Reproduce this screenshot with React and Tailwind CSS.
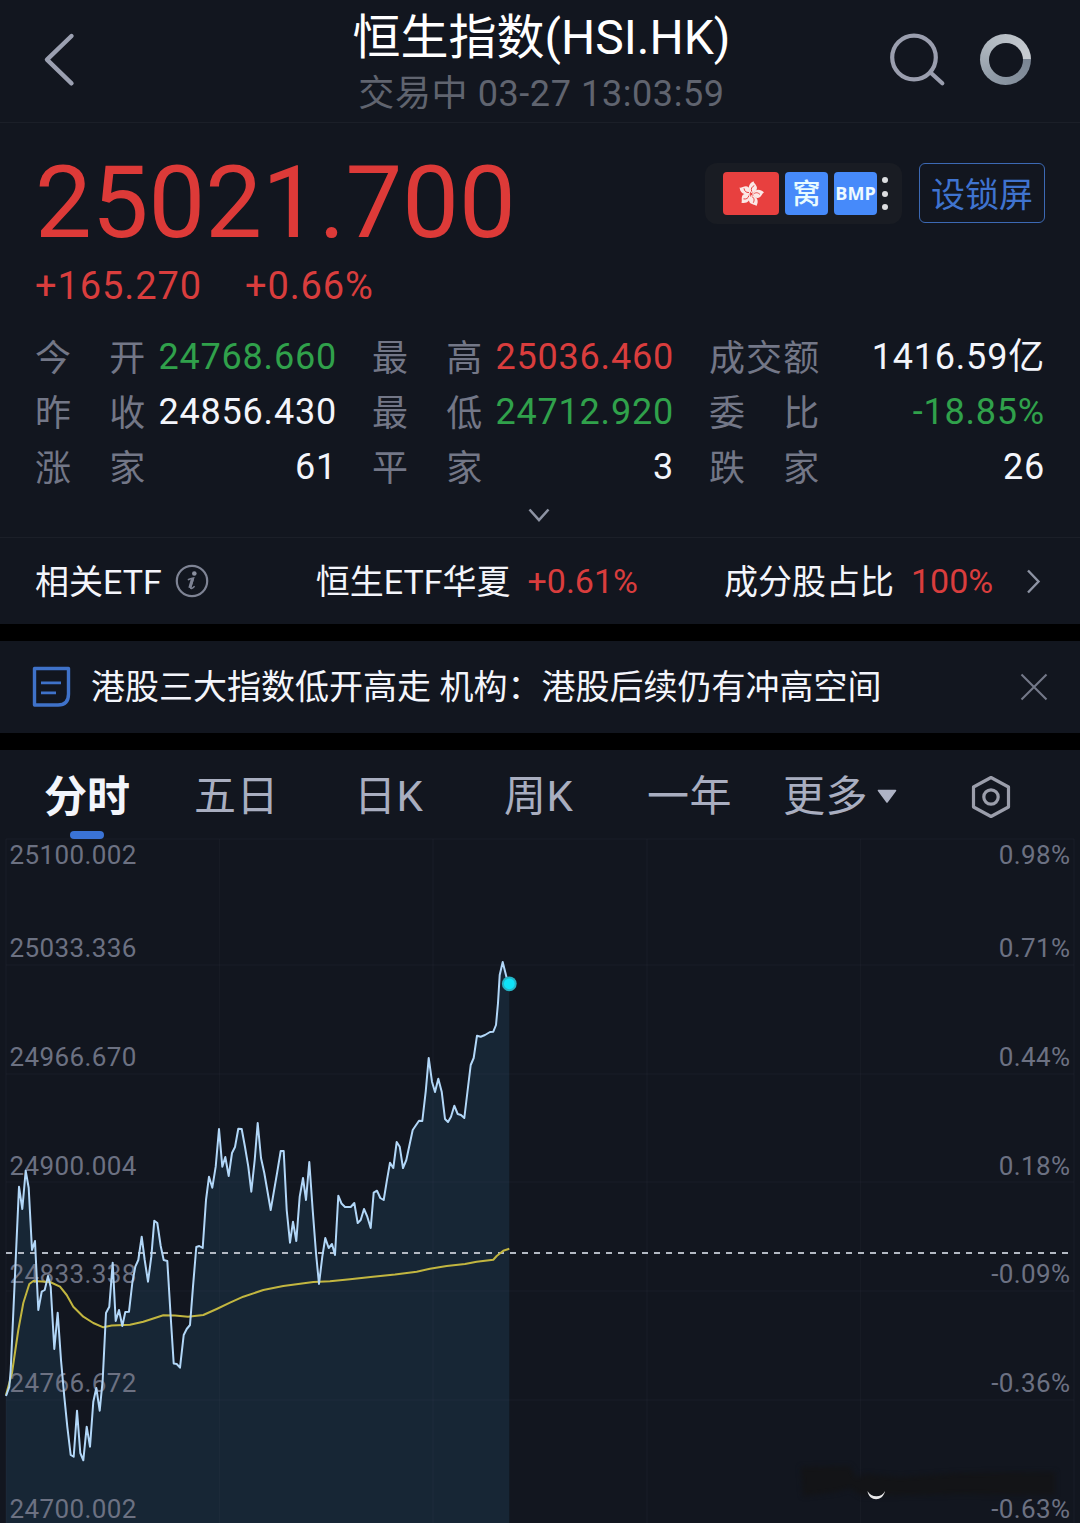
const stats = [
  { label: '今开', value: '24768.660', color: 'text-[#30a14b]' },
  { label: '最高', value: '25036.460', color: 'text-[#d93d3d]' },
  { label: '成交额', value: '1416.59亿', color: 'text-[#f3f5fb]' },
  { label: '昨收', value: '24856.430', color: 'text-[#f3f5fb]' },
  { label: '最低', value: '24712.920', color: 'text-[#30a14b]' },
  { label: '委比', value: '-18.85%', color: 'text-[#30a14b]' },
  { label: '涨家', value: '61', color: 'text-[#f3f5fb]' },
  { label: '平家', value: '3', color: 'text-[#f3f5fb]' },
  { label: '跌家', value: '26', color: 'text-[#f3f5fb]' },
];

// Chart coordinates, the plot starts at y = 838
const price = [
  [6, 1396], [9.3, 1387], [10.7, 1370], [19, 1186.7], [22.3, 1209], [25.7, 1170.7], [28.7, 1188], [32, 1250],
  [35, 1241], [38.3, 1310], [41.7, 1291.7], [44.7, 1290], [48, 1276], [50.7, 1287], [54.3, 1349],
  [57.7, 1312.7], [61, 1360], [64.3, 1396.7], [67.3, 1426.7], [70.7, 1455], [73.7, 1456.7],
  [77, 1410.7], [80.3, 1453], [83.3, 1460.3], [86.7, 1426.7], [90, 1446.7], [93.3, 1401.7],
  [96.3, 1388], [99.7, 1410.7], [102.7, 1380], [106, 1313], [109.3, 1306.7], [112.7, 1262.7],
  [115.7, 1321], [119, 1310], [122.3, 1326], [125.3, 1312], [129, 1311.7], [132.3, 1283],
  [135.3, 1266.7], [138.3, 1260], [141.7, 1236.7], [144.7, 1260], [148, 1281.7], [151.3, 1256.7],
  [154.3, 1220.7], [157.3, 1223], [160.7, 1246], [163.7, 1260], [167.3, 1261], [170.7, 1316.7],
  [173.7, 1363.5], [176.7, 1364], [180, 1367.7], [183.7, 1335], [186.7, 1329], [190, 1325],
  [193, 1286.7], [196.3, 1247], [199.3, 1246], [202.7, 1248], [206, 1200], [209, 1176.7],
  [212.3, 1187.7], [215.7, 1166.7], [219, 1129], [222.3, 1166.7], [225.3, 1157], [228.7, 1176],
  [232, 1153], [235, 1147], [238.3, 1128.7], [241.7, 1129], [245, 1147], [248.3, 1166.7],
  [251.3, 1191.7], [254.7, 1160], [257.7, 1123], [261, 1158], [264.3, 1173], [270.7, 1210],
  [277.3, 1171.7], [280.7, 1151], [283.7, 1151], [286.7, 1210], [290, 1242.7], [293, 1221.7],
  [296.3, 1241], [299.7, 1196.7], [303, 1178], [306, 1200], [309.3, 1162], [312.7, 1210],
  [316, 1253], [319, 1284], [322.3, 1256.7], [325.3, 1238], [328.7, 1248], [332, 1244],
  [335, 1255], [338.3, 1195.7], [341.5, 1203.5], [345, 1207], [350.7, 1207], [354.3, 1203],
  [357.7, 1223], [360.7, 1220], [364, 1209], [367.3, 1216.7], [370.7, 1228], [373.7, 1192.7],
  [377, 1190.7], [380.3, 1198], [383.7, 1200], [386.7, 1181.7], [390, 1162.7], [393.3, 1168],
  [396.7, 1142], [399.7, 1146.7], [403, 1168], [406.3, 1160], [412.7, 1130], [419, 1120.7],
  [422.3, 1121], [425.7, 1091.7], [428.7, 1058], [432, 1081.7], [435, 1092], [438.3, 1078.7],
  [441.7, 1091.7], [445, 1119], [448, 1122], [451, 1116.7], [454.3, 1105.7], [457.7, 1114],
  [461, 1115], [464.3, 1118], [467.3, 1093], [470.7, 1065], [473.7, 1058], [477, 1035.7],
  [480.7, 1036.7], [485, 1035], [490, 1032], [493.3, 1031.7], [496, 1025], [498, 1003],
  [499.7, 975], [502.7, 962], [506.7, 978], [509.3, 983.7],
];

const average = [
  [6, 1395], [12, 1373], [18.3, 1330], [23.3, 1303], [29.3, 1284], [33.3, 1281], [50, 1282],
  [60, 1286.7], [66.7, 1295], [73.3, 1306.7], [83.3, 1316.7], [93.3, 1323], [103.3, 1327.3],
  [111.7, 1325.5], [130, 1324.7], [143.3, 1321.7], [163.3, 1315.3], [175, 1315.5], [188, 1316.7],
  [203.3, 1315], [216.7, 1309], [230, 1302.7], [243.3, 1296.7], [263.3, 1290], [283.3, 1286],
  [313.3, 1282], [330, 1281.3], [350, 1279.3], [373, 1276.7], [395, 1274.5], [416.7, 1271.7],
  [430, 1268.7], [446.7, 1266], [465, 1264], [476.7, 1261.7], [493.3, 1259.7], [496.7, 1256],
  [503.3, 1250.7], [509.3, 1248.7],
];

const axis = [
  { y: 864, left: '25100.002', right: '0.98%' },
  { y: 957, left: '25033.336', right: '0.71%' },
  { y: 1066, left: '24966.670', right: '0.44%' },
  { y: 1175, left: '24900.004', right: '0.18%' },
  { y: 1283, left: '24833.338', right: '-0.09%' },
  { y: 1392, left: '24766.672', right: '-0.36%' },
  { y: 1518, left: '24700.002', right: '-0.63%' },
];

const toPoints = (list) => list.map((p) => p.join(',')).join(' ');

function Header() {
  return (
    <header className="flex h-[123px] border-b border-[#1b1f28] pl-[42px]">
      <svg className="mt-[31px] h-[57px] w-[80px]" viewBox="42 31 80 57" fill="none">
        <path d="M71.5 36 L47 59.7 L71.5 83.3" stroke="#9ba0b1" strokeWidth="4.4" strokeLinecap="round" strokeLinejoin="round" />
      </svg>
      <div className="flex w-[840px] flex-col items-center pr-[1px] whitespace-nowrap">
        <h1 className="mt-[8px] text-[48px] leading-[60px] text-white">恒生指数(HSI.HK)</h1>
        <p className="mt-[5px] text-[36px] leading-[42px] tracking-[0.6px] text-[#60646f]">交易中 03-27 13:03:59</p>
      </div>
      <div className="-ml-[75px] flex items-start gap-[33px]">
        <svg className="mt-[31px] h-[57px] w-[60px]" viewBox="887 31 60 57" fill="none" stroke="#9a9eae" strokeWidth="4.2">
          <circle cx="914" cy="57.5" r="21.8" />
          <path d="M930.5 72.5 L942.3 83.3" strokeLinecap="round" />
        </svg>
        <div className="mt-[34px] flex h-[51px] w-[51px] shrink-0 items-center justify-center rounded-full bg-[conic-gradient(from_90deg,#7a8593,#8f9aa6_35%,#aeb6be_60%,#c9cdd2)]">
          <div className="h-[34px] w-[34px] rounded-full bg-[#12161f]"></div>
        </div>
      </div>
    </header>
  );
}

function Bauhinia() {
  return (
    <svg className="h-[28px] w-[28px]" viewBox="-14 -14 28 28">
      {[18, 90, 162, 234, 306].map((angle) => (
        <g key={angle} transform={`rotate(${angle})`}>
          <path d="M0 -1 C-5 -4 -6 -9 -1.5 -13 C-1 -11 4.5 -10 4 -6 C3.8 -3.5 1.5 -2.5 0 -1 Z" fill="#fbe9e7" />
          <path d="M0 -2.5 C-2 -5 -1.5 -7 0.5 -9" stroke="#e8403f" strokeWidth="0.9" fill="none" />
        </g>
      ))}
    </svg>
  );
}

function Quote() {
  return (
    <section className="h-[415px] border-b border-[#1b1f28] pr-[35px] pl-[35px]">
      <div className="flex justify-between pt-[30px]">
        <div>
          <div className="mt-[10px] text-[101px] leading-[80px] text-[#dd3a38]">25021.700</div>
          <div className="mt-[23px] flex gap-[43px] text-[38px] leading-[40px] tracking-[0.9px] text-[#d93d3d]">
            <span>+165.270</span>
            <span>+0.66%</span>
          </div>
        </div>
        <div className="mt-[10px] flex gap-[17px]">
          <div className="flex h-[61px] w-[197px] items-center rounded-xl bg-[#191c23] pl-[18px]">
            <div className="flex h-[43px] w-[56px] items-center justify-center rounded-[4px] bg-[#e8403f]">
              <Bauhinia />
            </div>
            <div className="ml-[6px] h-[43px] w-[43px] rounded-[4px] bg-[#468afa] text-center text-[28px] leading-[45px] font-medium text-[#e8fbff]">窝</div>
            <div className="ml-[6px] flex h-[43px] w-[43px] items-center justify-center rounded-[4px] bg-[#468afa] font-['Open_Sans'] text-[18px] font-bold text-[#eefaff]">BMP</div>
            <div className="ml-[5px] flex flex-col gap-[7.4px]">
              <i className="h-[6px] w-[6px] rounded-full bg-[#dcdde0]"></i>
              <i className="h-[6px] w-[6px] rounded-full bg-[#dcdde0]"></i>
              <i className="h-[6px] w-[6px] rounded-full bg-[#dcdde0]"></i>
            </div>
          </div>
          <button className="h-[60px] w-[126px] rounded-md border border-[#3c69b4] pt-[2px] text-[34px] leading-[58px] text-[#3f73cf]">设锁屏</button>
        </div>
      </div>

      {/* Figures */}
      <div className="mt-[24px] grid grid-cols-[302px_302px_336px] gap-x-[35px] text-[36px] leading-[55px] tracking-[0.8px]">
        {stats.map((item) => (
          <div key={item.label} className="flex justify-between whitespace-nowrap">
            <div className="flex h-[55px] w-[111px] justify-between pt-[2px] text-[#737787]">
              {item.label.split('').map((char) => <span key={char}>{char}</span>)}
            </div>
            <span className={item.color}>{item.value}</span>
          </div>
        ))}
      </div>
      <svg className="mx-auto mt-[8px] h-[24px] w-[28px] -translate-x-px" viewBox="0 0 28 24" fill="none">
        <path d="M4.5 6.5 L14 17 L23.5 6.5" stroke="#8d93a3" strokeWidth="2.6" />
      </svg>
    </section>
  );
}

function EtfRow() {
  return (
    <section className="flex h-[86px] items-center pl-[35px] text-[34px] leading-[86px] whitespace-nowrap text-[#f3f5fb]">
      <span className="pt-px">相关ETF</span>
      <svg className="ml-[13px] h-[34px] w-[34px]" viewBox="0 0 34 34" fill="none" stroke="#7e8394">
        <circle cx="17" cy="17" r="15.2" strokeWidth="2.2" />
        <circle cx="19.3" cy="9.5" r="2.3" fill="#8b90a0" stroke="none" />
        <path d="M12.8 15.8 C15 15 16.5 14.4 18.6 14 L15.6 23 C15.2 25.2 17 24.8 19.6 22.2" strokeWidth="1.5" />
        <path d="M17.6 14.5 L14.8 24" strokeWidth="3" />
      </svg>
      <span className="ml-[107px] pt-px">恒生ETF华夏</span>
      <span className="ml-[17px]  text-[#d93d3d]">+0.61%</span>
      <span className="ml-[86px] pt-px">成分股占比</span>
      <span className="ml-[17px] text-[#d93d3d]">100%</span>
      <svg className="ml-[31px] h-[28px] w-[20px]" viewBox="0 0 20 28" fill="none">
        <path d="M4 3.5 L14.5 14.5 L4 25.5" stroke="#8d93a3" strokeWidth="2.4" />
      </svg>
    </section>
  );
}

function NewsBar() {
  return (
    <section className="flex h-[92px] items-center pl-[32px]">
      <svg className="h-[42px] w-[39px]" viewBox="0 0 39 42" fill="none" stroke="#3f72c9">
        <path d="M2.5 2.5 H36.5 V28 C36.5 35 33 39 26 39 H2.5 Z" strokeWidth="3.4" strokeLinejoin="round" />
        <path d="M9 16.8 H29 M9 26.8 H24" strokeWidth="2.8" />
      </svg>
      <p className="ml-[20px] flex-1 text-[34px] leading-[92px] whitespace-nowrap text-[#f3f5fb]">
        港股三大指数低开高走 机构：港股后续仍有冲高空间
      </p>
      <svg className="mr-[32px] h-[28px] w-[28px]" viewBox="0 0 28 28" fill="none">
        <path d="M1.5 1.5 L26.5 26.5 M26.5 1.5 L1.5 26.5" stroke="#737889" strokeWidth="2.1" />
      </svg>
    </section>
  );
}

function Tabs() {
  return (
    <nav className="flex h-[88px] pl-[44px] text-[42px] leading-[94px] tracking-[0.6px] whitespace-nowrap text-[#a9aec0]">
      <div className="flex w-[86px] flex-col items-center text-[43px] font-bold tracking-normal text-[#f3f5fb]">
        <span className="h-[81px]">分时</span>
        <i className="h-[8px] w-[34px] shrink-0 rounded-full bg-[#3a73d6]"></i>
      </div>
      <span className="ml-[64px] w-[84px]">五日</span>
      <span className="ml-[76px] w-[68px]">日K</span>
      <span className="ml-[82px] w-[68px]">周K</span>
      <span className="ml-[75px] w-[84px]">一年</span>
      <span className="ml-[52px] w-[84px]">更多</span>
      <svg className="mt-[39px] ml-[10px] h-[15px] w-[20px]" viewBox="0 0 20 15">
        <path d="M1.5 1.5 H18.5 L10 13 Z" fill="#aeb3c5" stroke="#aeb3c5" strokeWidth="1.6" strokeLinejoin="round" />
      </svg>
      <svg className="mt-[25px] ml-[73px] h-[44px] w-[42px]" viewBox="0 0 42 44" fill="none" stroke="#9b9eab" strokeWidth="3.2">
        <path d="M21 2.5 L38.5 12 V32 L21 41.5 L3.5 32 V12 Z" strokeLinejoin="round" />
        <circle cx="21" cy="22" r="7.2" />
      </svg>
    </nav>
  );
}

function Chart() {
  return (
    <svg className="block h-[685px] w-[1080px]" viewBox="0 838 1080 685" fill="none">
      <defs>
        <filter id="soft" x="-20%" y="-50%" width="140%" height="200%" colorInterpolationFilters="sRGB">
          <feGaussianBlur stdDeviation="2.5" />
        </filter>
      </defs>
      <polygon points={`6,1523 ${toPoints(price)} 509.3,1523`} fill="#172635" />
      <g stroke="#8c96aa" strokeOpacity="0.045" strokeWidth="1.5">
        {[839, 965, 1074, 1182, 1291, 1400].map((y) => <path key={y} d={`M6 ${y} H1074`} />)}
        {[6, 219.5, 433, 647, 860.5, 1074].map((x) => <path key={x} d={`M${x} 839 V1523`} />)}
      </g>

      {/* Faded mark in the corner */}
      <g filter="url(#soft)" fill="#131417">
        <path d="M801 1467 L850 1466 L856 1478 L866 1474 L900 1477 L960 1473 L1055 1472 V1495 L960 1494 L862 1496 L850 1488 L836 1492 L803 1496 Z" />
      </g>
      <path d="M867.5 1491 C869 1502 883 1502 885 1491 C882 1498 871 1498 867.5 1491 Z" fill="#e9e9ea" />

      <g fontFamily="Roboto, sans-serif" fontSize="26" letterSpacing="0.4" fill="#6c7182">
        {axis.map((row) => (
          <g key={row.y}>
            <text x="9.5" y={row.y}>{row.left}</text>
            <text x="1070.5" y={row.y} textAnchor="end">{row.right}</text>
          </g>
        ))}
      </g>
      <path d="M6 1253 H1070" stroke="#b3b9c3" strokeWidth="1.8" strokeDasharray="6 6" />
      <polyline points={toPoints(average)} stroke="#c2b640" strokeWidth="2" strokeLinejoin="round" />
      <polyline points={toPoints(price)} stroke="#b2d7f8" strokeWidth="2" strokeLinejoin="round" />
      <circle cx="509.3" cy="983.8" r="7.4" fill="#25b4c6" />
      <circle cx="509.3" cy="983.8" r="5.4" fill="#0fe3f8" />
    </svg>
  );
}

function App() {
  return (
    <div className="h-[1523px] w-[1080px] overflow-hidden bg-[#12161f] font-[Roboto,'Noto_Sans_CJK_SC',sans-serif]">
      <Header />
      <Quote />
      <EtfRow />
      <div className="h-[17px] bg-black"></div>
      <NewsBar />
      <div className="h-[17px] bg-black"></div>
      <Tabs />
      <Chart />
    </div>
  );
}

export default App;
